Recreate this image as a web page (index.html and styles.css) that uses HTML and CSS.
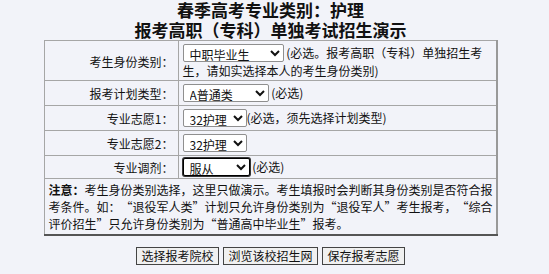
FILE: index.html
```html
<!DOCTYPE html>
<html lang="zh-CN">
<head>
  <meta charset="UTF-8" />
  <title>报考高职（专科）单独考试招生演示</title>
  <link rel="stylesheet" href="styles.css">
</head>
<body>
  <div class="page">
    <div class="title">
      <div class="title-line">春季高考专业类别：护理</div>
      <div class="title-line">报考高职（专科）单独考试招生演示</div>
    </div>

    <table class="form-table">
      <tr class="row-tall">
        <td class="label">考生身份类别：</td>
        <td class="field">
          <select class="sel sel-id"><option>中职毕业生</option></select>
          (必选。报考高职（专科）单独招生考生，请如实选择本人的考生身份类别)
        </td>
      </tr>
      <tr>
        <td class="label">报考计划类型：</td>
        <td class="field">
          <select class="sel sel-plan"><option>A普通类</option></select>
          (必选)
        </td>
      </tr>
      <tr>
        <td class="label">专业志愿1：</td>
        <td class="field">
          <select class="sel sel-major"><option>32护理</option></select>(必选，须先选择计划类型)
        </td>
      </tr>
      <tr>
        <td class="label">专业志愿2：</td>
        <td class="field">
          <select class="sel sel-major"><option>32护理</option></select>
        </td>
      </tr>
      <tr class="row-short">
        <td class="label">专业调剂：</td>
        <td class="field">
          <select class="sel sel-adjust"><option>服从</option></select>
          (必选)
        </td>
      </tr>
      <tr>
        <td class="note" colspan="2"><b>注意：</b>考生身份类别选择，这里只做演示。考生填报时会判断其身份类别是否符合报考条件。如：<span class="ql">“</span>退役军人类<span class="qr">”</span>计划只允许身份类别为<span class="ql">“</span>退役军人<span class="qr">”</span>考生报考，<span class="ql">“</span>综合评价招生<span class="qr">”</span>只允许身份类别为<span class="ql">“</span>普通高中毕业生<span class="qr">”</span>报考。</td>
      </tr>
    </table>

    <div class="actions">
      <button class="btn">选择报考院校</button>
      <button class="btn">浏览该校招生网</button>
      <button class="btn">保存报考志愿</button>
    </div>
  </div>
</body>
</html>
```

FILE: styles.css
```css
html, body {
  margin: 0;
  padding: 0;
  background: #f2f3f9;
  color: #111;
  font-family: "Noto Sans CJK SC", sans-serif;
  font-size: 12px;
}

.page {
  width: 541px;
}

.title {
  text-align: center;
  font-size: 17px;
  font-weight: bold;
}

.title-line {
  height: 20px;
  line-height: 20px;
}

.form-table {
  width: 454px;
  margin: 0 auto;
  border-collapse: collapse;
  border-top: 1px solid #8a8a8a;
  border-left: 1px solid #8a8a8a;
  border-right: 2px solid #999;
  border-bottom: 2px solid #555;
}

.form-table td {
  border: 1px solid #a6a6a6;
  padding: 0 4px;
  height: 24px;
  line-height: 17px;
  vertical-align: middle;
}

.form-table .row-tall td {
  height: 34px;
  padding-top: 3px;
  padding-bottom: 1px;
}

.form-table .row-short td {
  height: 22px;
}

.form-table td.label {
  width: 125px;
  text-align: right;
  white-space: nowrap;
}

.form-table .row-tall td.field {
  vertical-align: top;
}

.form-table td.note {
  height: 51px;
  padding: 2px 2px 2px 4px;
  line-height: 17px;
}

.ql,
.qr {
  display: inline-block;
  width: 1em;
}

.ql { text-align: right; }
.qr { text-align: left; }

.sel {
  font-family: "Noto Sans CJK SC", sans-serif;
  font-size: 12px;
  height: 18px;
  padding: 0 2px;
  border: 1px solid #8f8f8f;
  border-radius: 2px;
  background: #fff;
  color: #111;
  vertical-align: top;
}

.sel-id { width: 101px; }
.sel-plan { width: 86px; }
.sel-major { width: 64px; }

.sel-adjust {
  width: 67px;
  border: 1px solid #000;
  box-shadow: 0 0 0 1px #333;
}

.actions {
  display: flex;
  justify-content: center;
  gap: 4px;
  margin-top: 11px;
}

.btn {
  font-family: "Noto Sans CJK SC", sans-serif;
  font-size: 12px;
  height: 18px;
  line-height: 16px;
  padding: 0 4.5px;
  background: #f0f0f0;
  color: #111;
  border: 1px solid #444;
  border-radius: 0;
}
```
